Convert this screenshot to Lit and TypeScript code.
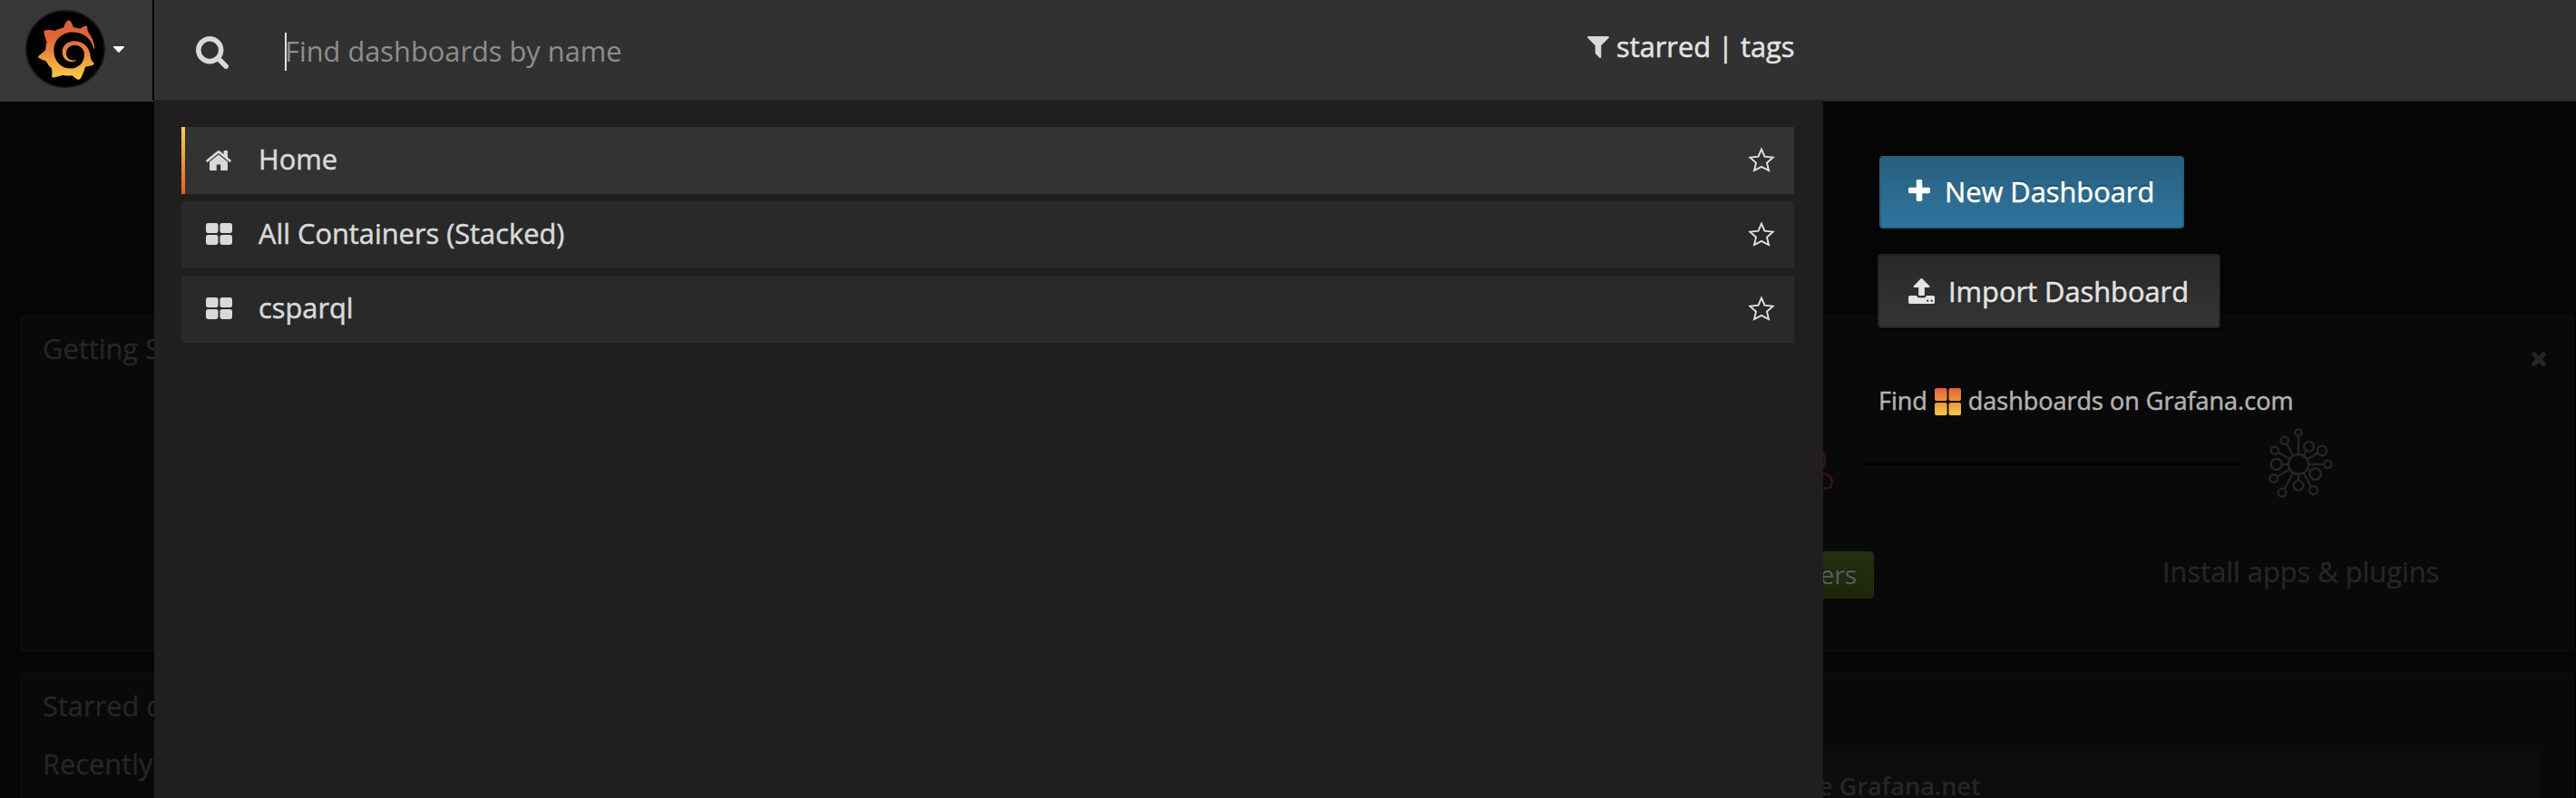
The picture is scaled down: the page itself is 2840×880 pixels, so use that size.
import { LitElement, html, svg, css } from "lit";
import { customElement, property } from "lit/decorators.js";

interface Glyph {
  box: string;
  body: unknown;
}

const tiles = svg`
  <rect x="0" y="0" width="13.6" height="11.2" rx="2.4"></rect>
  <rect x="15.6" y="0" width="13.6" height="11.2" rx="2.4"></rect>
  <rect x="0" y="13" width="13.6" height="11.2" rx="2.4"></rect>
  <rect x="15.6" y="13" width="13.6" height="11.2" rx="2.4"></rect>`;

const GLYPHS: Record<string, Glyph> = {
  search: {
    box: "64 128 1664 1664",
    body: svg`<path d="M1216 832q0-185-131.5-316.5t-316.5-131.5-316.5 131.5-131.5 316.5 131.5 316.5 316.5 131.5 316.5-131.5 131.5-316.5zm512 832q0 52-38 90t-90 38q-54 0-90-38l-343-342q-179 124-399 124-143 0-273.5-55.5t-225-150-150-225-55.5-273.5 55.5-273.5 150-225 225-150 273.5-55.5 273.5 55.5 225 150 150 225 55.5 273.5q0 220-124 399l343 343q37 37 37 90z"></path>`,
  },
  home: {
    box: "89 253 1614 1283",
    body: svg`<path d="M1472 992v480q0 26-19 45t-45 19h-384v-384h-256v384h-384q-26 0-45-19t-19-45v-480q0-1 .5-3t.5-3l575-474 575 474q1 2 1 6zm223-69l-62 74q-8 9-21 11h-3q-13 0-21-7l-692-577-692 577q-12 8-24 7-13-2-21-11l-62-74q-8-10-7-23.5t11-21.5l719-599q32-26 76-26t76 26l244 204v-195q0-14 9-23t23-9h192q14 0 23 9t9 23v408l219 182q10 8 11 21.5t-7 23.5z"></path>`,
  },
  tiles: { box: "0 0 29.2 24.2", body: tiles },
  star: {
    box: "0 0 30 29",
    body: svg`<path d="M15 2.6 L18.5 10.6 L27.6 11.6 L21 17.6 L23 26 L15 21.9 L7 26 L9 17.6 L2.4 11.6 L11.5 10.6 Z" fill="none" stroke="currentColor" stroke-width="1.9"></path>`,
  },
  filter: {
    box: "190 256 1412 1408",
    body: svg`<path d="M1595 295q17 41-14 70l-493 493v742q0 42-39 59-13 5-25 5-27 0-45-19l-256-256q-19-19-19-45v-486l-493-493q-31-29-14-70 17-39 59-39h1280q42 0 59 39z"></path>`,
  },
  plus: {
    box: "192 128 1408 1408",
    body: svg`<path d="M1600 736v192q0 40-28 68t-68 28h-416v416q0 40-28 68t-68 28h-192q-40 0-68-28t-28-68v-416h-416q-40 0-68-28t-28-68v-192q0-40 28-68t68-28h416v-416q0-40 28-68t68-28h192q40 0 68 28t28 68v416h416q40 0 68 28t28 68z"></path>`,
  },
  upload: {
    box: "64 64 1664 1600",
    body: svg`<path d="M1344 1472q0-26-19-45t-45-19-45 19-19 45 19 45 45 19 45-19 19-45zm256 0q0-26-19-45t-45-19-45 19-19 45 19 45 45 19 45-19 19-45zm128-224v320q0 40-28 68t-68 28h-1472q-40 0-68-28t-28-68v-320q0-40 28-68t68-28h427q21 56 70.5 92t110.5 36h256q61 0 110.5-36t70.5-92h427q40 0 68 28t28 68zm-325-648q-17 40-59 40h-256v448q0 26-19 45t-45 19h-256q-26 0-45-19t-19-45v-448h-256q-42 0-59-40-17-39 14-69l448-448q18-19 45-19t45 19l448 448q31 30 14 69z"></path>`,
  },
  close: {
    box: "0 0 16 16",
    body: svg`<path d="M2.8 2.8 L13.2 13.2 M13.2 2.8 L2.8 13.2" fill="none" stroke="currentColor" stroke-width="5" stroke-linecap="round"></path>`,
  },
  caret: { box: "0 0 12 7", body: svg`<path d="M0 0 H12 V1 L6.8 6.4 Q6 7 5.2 6.4 L0 1 Z"></path>` },
  tilesWarm: {
    box: "0 0 29 30",
    body: svg`
      <defs><linearGradient id="warm" x1="0" y1="0" x2="0" y2="30" gradientUnits="userSpaceOnUse">
        <stop offset="0" stop-color="#e0653a"></stop><stop offset="1" stop-color="#f6c64b"></stop>
      </linearGradient></defs>
      <g fill="url(#warm)">
        <rect x="0" y="0" width="13.6" height="14" rx="2"></rect><rect x="15.4" y="0" width="13.6" height="14" rx="2"></rect>
        <rect x="0" y="16" width="13.6" height="14" rx="2"></rect><rect x="15.4" y="16" width="13.6" height="14" rx="2"></rect>
      </g>`,
  },
  logo: {
    box: "9 9 264 270",
    body: svg`
      <defs><linearGradient id="flame" x1="0" y1="46" x2="0" y2="249" gradientUnits="userSpaceOnUse">
        <stop offset="0" stop-color="#de5f3a"></stop><stop offset="0.3" stop-color="#e0653a"></stop>
        <stop offset="1" stop-color="#fbcf49"></stop>
      </linearGradient></defs>
      <circle cx="141" cy="144" r="130" fill="#000" stroke="#1b1b1b" stroke-width="5"></circle>
      <path fill="url(#flame)" d="M148 48 Q152 44 157 49 Q165 58 168 71 Q180 71 190 76 Q200 67 209 66 Q215 66 214 72 Q213 80 217 87 Q236 112 238 143 L235 143
        C228 108 200 87 164 87 C130 87 103 114 103 149 C103 185 128 210 159 210 C186 210 204 188 204 163 C204 144 190 131 172 131
        C156 131 144 143 144 158 C144 172 153 181 163 182 C169 183 173 181 177 179 C175 186 167 187 160 187 C143 186 131 172 131 154
        C131 133 148 117 171 117 C200 117 222 138 224 168 Q224 178 229 184 L236 192 Q237 198 229 200 Q216 202 208 204
        Q203 220 194 240 Q189 250 180 247 Q172 241 163 234 Q148 236 133 232 Q120 236 102 241 Q95 241 97 234 Q98 220 96 210 Q84 200 77 185
        Q62 180 51 173 Q50 170 54 166 Q68 155 76 147 Q75 132 80 120 Q72 103 70 86 Q70 80 78 80 Q94 79 106 83 Q119 75 135 72 Q139 57 148 48 Z"></path>`,
  },
  hub: {
    box: "-36 -42 76 80",
    body: svg`<g fill="none" stroke="currentColor" stroke-width="2.4">
      <circle cx="0" cy="0" r="11"></circle>
      <circle cx="0" cy="-35" r="3.6"></circle><path d="M0 -31 V-11"></path>
      <circle cx="-15.3" cy="-26.3" r="4.2"></circle><path d="M-13 -22.5 L-6 -10"></path>
      <circle cx="-26.3" cy="-15.3" r="4.2"></circle><path d="M-22.5 -13 L-10 -6"></path>
      <circle cx="-24.3" cy="0" r="6"></circle><path d="M-18 0 H-11"></path>
      <circle cx="-27.3" cy="15.6" r="4.4"></circle><path d="M-23.5 13.3 L-10 6"></path>
      <circle cx="-18" cy="31.3" r="4.4"></circle><path d="M-15.8 27.5 L-6 10"></path>
      <circle cx="0" cy="23.3" r="5.4"></circle><path d="M0 18 V11"></path>
      <circle cx="16.5" cy="28.7" r="4.6"></circle><path d="M14 24.6 L6 10"></path>
      <circle cx="18.6" cy="10.7" r="6.2"></circle><path d="M12.6 7 L10 5"></path>
      <circle cx="32.3" cy="0" r="4.2"></circle><path d="M28 0 H11"></path>
      <circle cx="26" cy="-15" r="5.2"></circle><path d="M21.4 -12.4 L10 -6"></path>
      <circle cx="11.6" cy="-19.6" r="5.4"></circle><path d="M8.8 -15 L6 -10"></path>
    </g>`,
  },
  team: {
    box: "0 0 60 42",
    body: svg`<g fill="none" stroke="#37160c" stroke-width="2.4">
      <path d="M40 -3 C46 -3 49 1 50 5 Q52 10 50.5 14 L48 20"></path>
      <path d="M48 24 L55 27.5 Q58.7 29.5 58.7 33 V36 Q58 41.5 53.5 41.5 H8"></path>
    </g>`,
  },
};

@customElement("ui-icon")
export class UiIcon extends LitElement {
  @property() name = "";
  static styles = css`
    :host { display: block; flex: none; }
    svg { display: block; width: 100%; height: 100%; overflow: visible; }
  `;
  render() {
    const g = GLYPHS[this.name];
    return html`<svg viewBox=${g.box} preserveAspectRatio="none" fill="currentColor">${g.body}</svg>`;
  }
}

@customElement("home-dashboard")
export class HomeDashboard extends LitElement {
  static styles = css`
    :host { display: flex; flex-direction: column; gap: 24px; height: 880px; box-sizing: border-box; padding: 348px 2px 0 22px; background: #050505; color: #262626; overflow: hidden; }
    .panel { box-sizing: border-box; border: 2px solid #0c0c0c; background: #090909; flex: none; }
    .start { height: 370px; padding: 12px 24px 0 23px; }
    .lists { height: 160px; padding: 12px 34px 0 23px; }
    .title { font-size: 30.8px; line-height: 44px; white-space: nowrap; }
    .head { display: flex; justify-content: space-between; align-items: center; height: 44px; }
    .close { width: 16px; height: 16px; margin: 26px 5px 0 0; align-self: flex-start; }
    .steps { display: grid; grid-template-columns: 1fr 420px 129px; padding-right: 212px; margin-top: 48px; height: 108px; }
    .team { width: 60px; height: 42px; justify-self: end; margin: 43px 30px 0 0; }
    .link { height: 4px; margin-top: 56px; background: #040404; border-bottom: 2px solid #0c0c0c; }
    .hub { width: 76px; height: 80px; margin: 16px 0 0 27px; }
    .actions { display: grid; grid-template-columns: 1fr 305px; column-gap: 318px; padding-right: 123px; margin-top: 46px; align-items: start; }
    .add { justify-self: end; height: 52px; box-sizing: border-box; padding: 0 18px; border: 1px solid #26310f; border-radius: 4px; background: linear-gradient(#242f10, #1d260c); color: #5a5a5a; font-size: 28px; line-height: 49px; white-space: nowrap; text-shadow: 0 -1px #0b0e05; }
    .step { font-size: 30.8px; line-height: 44px; white-space: nowrap; }
    .title, .step, .add { -webkit-text-stroke: 0.3px currentColor; }
    .cols { display: grid; grid-template-columns: 1fr 940px; align-items: start; }
    .left { display: grid; row-gap: 20px; align-content: start; }
    .feed { margin-top: 72px; height: 80px; background: #0c0c0c; box-sizing: border-box; padding: 20px 0 0 62px; font-size: 27px; line-height: 38px; font-weight: 600; white-space: nowrap; }
  `;
  render() {
    return html`
      <section class="panel start">
        <div class="head">
          <div class="title">Getting Started with Grafana</div>
          <ui-icon class="close" name="close"></ui-icon>
        </div>
        <div class="steps">
          <ui-icon class="team" name="team"></ui-icon>
          <div class="link"></div>
          <ui-icon class="hub" name="hub"></ui-icon>
        </div>
        <div class="actions">
          <div class="add">Add Users</div>
          <div class="step">Install apps &amp; plugins</div>
        </div>
      </section>
      <section class="panel lists">
        <div class="cols">
          <div class="left">
            <div class="title">Starred dashboards</div>
            <div class="title">Recently viewed dashboards</div>
          </div>
          <div class="feed">Browse Grafana.net</div>
        </div>
      </section>
    `;
  }
}

@customElement("dash-search")
export class DashSearch extends LitElement {
  static styles = css`
    :host { display: grid; grid-template-columns: 168px 1fr; height: 880px; color: #e3e3e3; }
    .brand { display: flex; align-items: center; box-sizing: border-box; height: 112px; padding: 0 0 4px 28px; background: #373737; gap: 9px; color: #fff; }
    .logo { width: 88px; height: 88px; }
    .caret { width: 12px; height: 7px; }
    .main { display: grid; grid-template-rows: 110px 1fr; }
    .bar { display: flex; align-items: center; background: #313131; border-left: 2px solid #000; box-shadow: 0 2px #282828; color: #d8d9da; }
    .glass { width: 36px; height: 36px; margin: 6px 0 0 46px; }
    .field { display: flex; align-items: center; margin: 2px 0 0 62px; width: 1436px; height: 42px; font-size: 30.8px; color: #8e8e8e; white-space: nowrap; }
    .field::before { content: ""; width: 2px; height: 42px; margin: 2px -2px 0 0; background: #e3e3e3; }
    .filters { display: flex; align-items: center; color: #e3e3e3; font-size: 30.8px; line-height: 42px; white-space: pre; margin-top: -8px; }
    .funnel { width: 24px; height: 24px; margin: 2px 8px 0 0; color: #d8d9da; }
    .body { display: grid; grid-template-columns: 1840px 1fr; position: relative; margin-left: 2px; }
    .results { background: #201e1f; padding: 30px 32px 0 30px; display: flex; flex-direction: column; gap: 8px; }
    .row { display: flex; align-items: center; box-sizing: border-box; height: 74px; padding: 0 21px 0 27px; background: #292929; font-size: 30.8px; }
    .row.on { background: #333; border-left: 4px solid; border-image: linear-gradient(#fbd449, #eb5a28) 1; padding-left: 23px; }
    .mark { width: 29px; height: 24px; margin: -2px 29px 0 0; color: #d8d9da; }
    .mark.house { width: 28px; height: 22px; margin: 0 30px 0 0; }
    .name { flex: 1; line-height: 42px; padding-bottom: 4px; white-space: nowrap; color: #d8d9da; }
    .star { width: 30px; height: 29px; margin-bottom: 1px; }
    .name, .filters, .btn, .find { -webkit-text-stroke: 0.5px currentColor; }
    .side { display: flex; flex-direction: column; align-items: flex-start; padding: 62px 0 0 60px; }
    .btn { display: flex; align-items: center; box-sizing: border-box; border-radius: 4px; font-size: 30.8px; line-height: 42px; white-space: nowrap; text-shadow: 0 -2px 1px rgba(0, 0, 0, 0.3); }
    .new { margin-left: 2px; width: 336px; height: 80px; padding-left: 30px; color: #fff; border: 2px solid #265f80; border-top-color: #285f7f; background: linear-gradient(#285f80, #2f759c); }
    .import { margin-top: 28px; width: 378px; height: 82px; padding-left: 32px; border: 2px solid #232323; background: linear-gradient(#292929, #343434); box-shadow: 1px 2px 2px #000; }
    .plus { width: 24px; height: 24px; margin: 0 16px 4px 0; }
    .up { width: 29px; height: 28px; margin: 0 15px 0 0; }
    .label { margin-bottom: 3px; }
    .import .label { margin-bottom: 1px; }
    .find { display: flex; align-items: center; margin: 59px 0 0 1px; font-size: 27px; line-height: 42px; color: #b3b3b3; white-space: nowrap; }
    .warm { width: 29px; height: 30px; margin: 2px 8px 0 8px; }
  `;
  private rows = [
    { title: "Home", icon: "home", on: true },
    { title: "All Containers (Stacked)", icon: "tiles", on: false },
    { title: "csparql", icon: "tiles", on: false },
  ];
  render() {
    return html`
      <div class="brand">
        <ui-icon class="logo" name="logo"></ui-icon>
        <ui-icon class="caret" name="caret"></ui-icon>
      </div>
      <div class="main">
        <div class="bar">
          <ui-icon class="glass" name="search"></ui-icon>
          <div class="field">Find dashboards by name</div>
          <div class="filters"><ui-icon class="funnel" name="filter"></ui-icon><span>starred</span><span> | </span><span>tags</span></div>
        </div>
        <div class="body">
          <div class="results">
            ${this.rows.map(
              (r) => html`<div class="row ${r.on ? "on" : ""}">
                <ui-icon class="mark ${r.on ? "house" : ""}" name=${r.icon}></ui-icon>
                <div class="name">${r.title}</div>
                <ui-icon class="star" name="star"></ui-icon>
              </div>`
            )}
          </div>
          <div class="side">
            <div class="btn new"><ui-icon class="plus" name="plus"></ui-icon><span class="label">New Dashboard</span></div>
            <div class="btn import"><ui-icon class="up" name="upload"></ui-icon><span class="label">Import Dashboard</span></div>
            <div class="find"><span>Find</span><ui-icon class="warm" name="tilesWarm"></ui-icon><span>dashboards on Grafana.com</span></div>
          </div>
        </div>
      </div>
    `;
  }
}

@customElement("app-root")
export class AppRoot extends LitElement {
  static styles = css`
    :host { display: block; position: relative; width: 2840px; height: 880px; overflow: hidden; font-family: "Open Sans", "Noto Sans", sans-serif; }
    .overlay { position: absolute; inset: 0; }
  `;
  render() {
    return html`<home-dashboard></home-dashboard><dash-search class="overlay"></dash-search>`;
  }
}
